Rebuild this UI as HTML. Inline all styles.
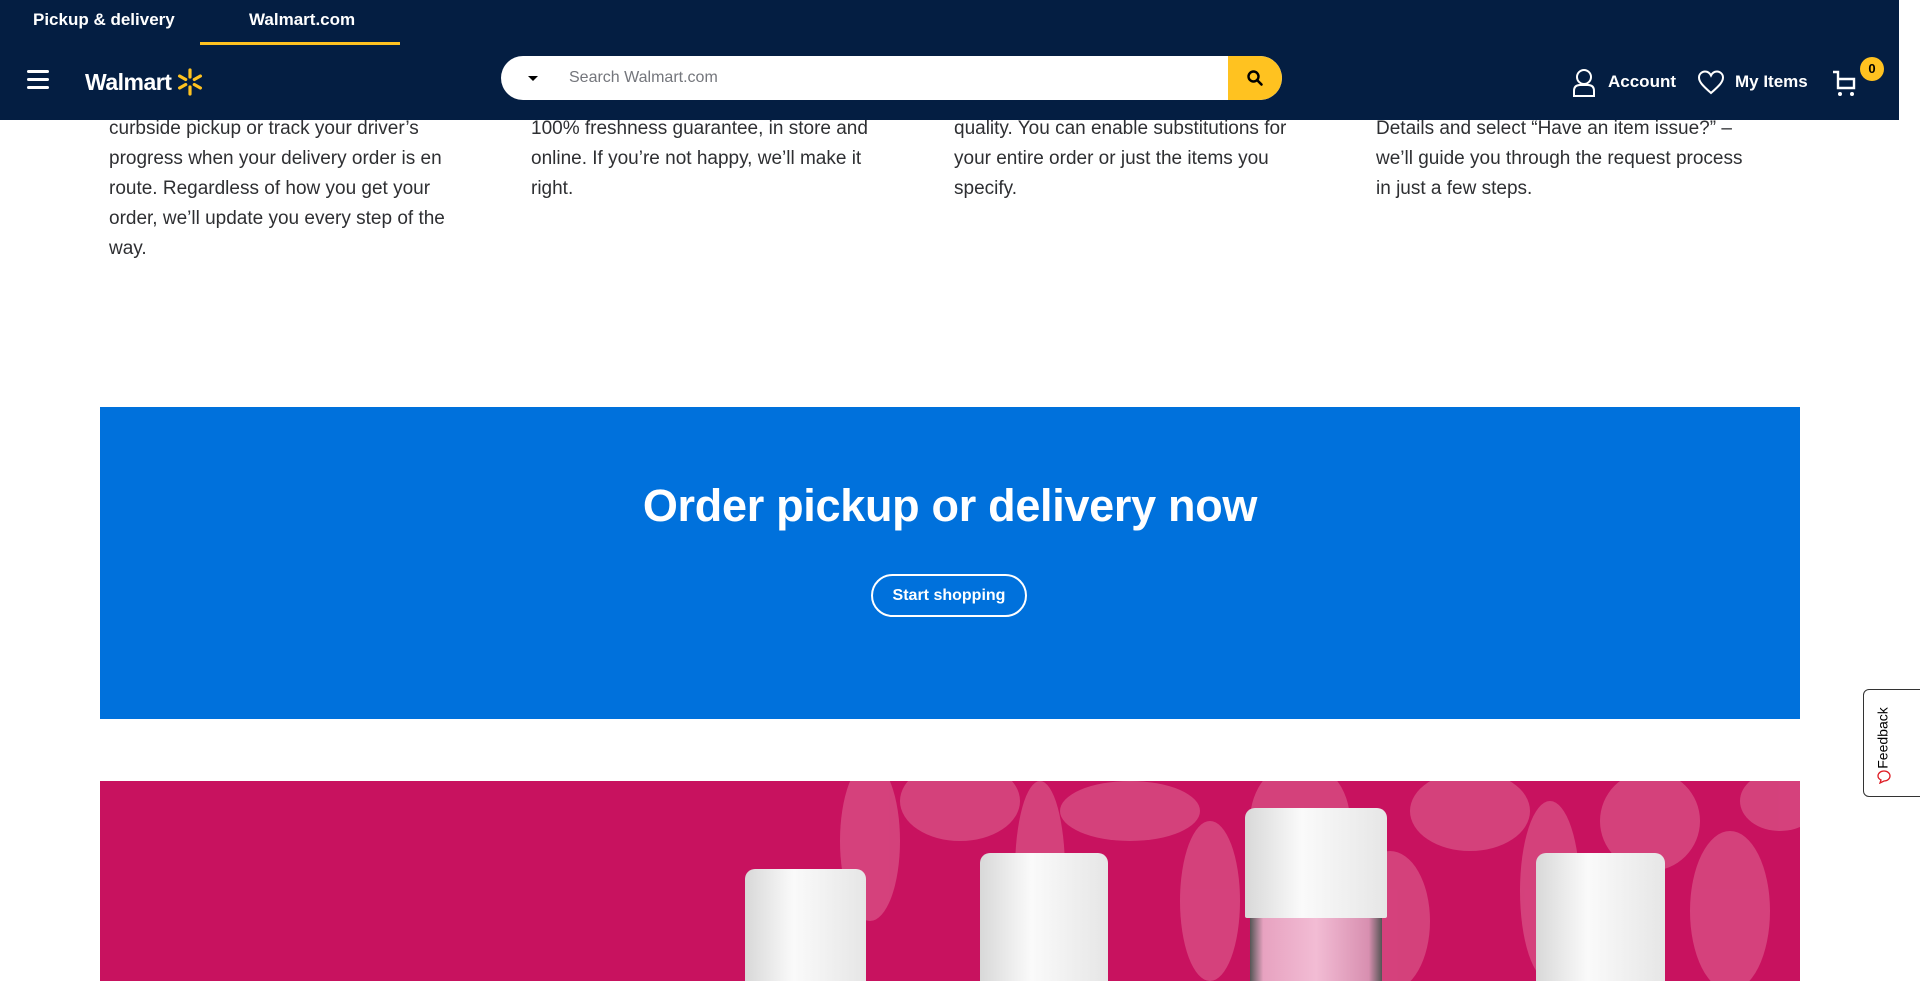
<!DOCTYPE html>
<html><head><meta charset="utf-8"><style>
*{margin:0;padding:0;box-sizing:border-box}
body{width:1920px;height:937px;overflow:hidden;background:#fff;font-family:"Liberation Sans",sans-serif;position:relative}
.hdr{position:absolute;left:0;top:0;width:1899px;height:120px;background:#041e42;z-index:5}
.tab{position:absolute;top:10px;color:#fff;font-weight:bold;font-size:17px}
.ul{position:absolute;left:200px;top:42px;width:200px;height:3px;background:#ffc220}
.ham{position:absolute;left:27px;top:70px;width:22px}
.ham i{display:block;height:3px;background:#fff;border-radius:2px;margin-bottom:5px}
.logo{position:absolute;left:85px;top:69px;color:#fff;font-weight:bold;font-size:23px;letter-spacing:-0.5px}
.search{position:absolute;left:501px;top:56px;width:781px;height:44px;background:#fff;border-radius:22px;overflow:hidden}
.search .ph{position:absolute;left:68px;top:13px;color:#74767c;font-size:16px}
.search .car{position:absolute;left:27px;top:20px;width:0;height:0;border-left:5px solid transparent;border-right:5px solid transparent;border-top:5px solid #000}
.search .btn{position:absolute;right:0;top:0;width:54px;height:44px;background:#ffc220;border-radius:0 22px 22px 0}
.nav{position:absolute;top:72px;color:#fff;font-weight:bold;font-size:17px}
.badge{position:absolute;left:1860px;top:57px;width:24px;height:24px;border-radius:50%;background:#ffc220;color:#000;font-size:13px;font-weight:bold;text-align:center;line-height:24px}
.col{position:absolute;top:114px;width:370px;font-size:19px;line-height:30px;color:#2e2f32}
.blue{position:absolute;left:100px;top:407px;width:1700px;height:312px;background:#0071dc}
.sbtn{position:absolute;left:871px;top:574px;width:156px;height:43px;border:2px solid #fff;border-radius:22px;color:#fff;font-weight:bold;font-size:16px;line-height:39px;text-align:center}
.pink{position:absolute;left:100px;top:781px;width:1700px;height:200px;background:#c8125f;overflow:hidden}
.cap{position:absolute;background:linear-gradient(90deg,#d8d8d8,#fafafa 40%,#e6e6e6);border-radius:10px 10px 2px 2px}
.fb{position:absolute;left:1863px;top:689px;width:70px;height:108px;border:1px solid #333;border-radius:6px;background:#fff}
.fb span{position:absolute;left:-12px;top:40px;transform:rotate(-90deg);font-size:14px;color:#000}
</style></head><body>
<div class="col" style="left:109px">curbside pickup or track your driver’s progress when your delivery order is en route. Regardless of how you get your order, we’ll update you every step of the way.</div>
<div class="col" style="left:531px">100% freshness guarantee, in store and online. If you’re not happy, we’ll make it right.</div>
<div class="col" style="left:954px">quality. You can enable substitutions for your entire order or just the items you specify.</div>
<div class="col" style="left:1376px">Details and select “Have an item issue?” – we’ll guide you through the request process in just a few steps.</div>

<div class="hdr">
<div class="tab" style="left:33px">Pickup &amp; delivery</div>
<div class="tab" style="left:249px">Walmart.com</div>
<div class="ul"></div>
<div class="ham"><i></i><i></i><i></i></div>
<div class="logo">Walmart</div>
<svg style="position:absolute;left:176px;top:68px" width="28" height="28" viewBox="0 0 28 28"><g stroke="#ffc220" stroke-width="3.2" stroke-linecap="round"><line x1="14" y1="2" x2="14" y2="9"/><line x1="14" y1="19" x2="14" y2="26"/><line x1="3.6" y1="8" x2="9.7" y2="11.5"/><line x1="18.3" y1="16.5" x2="24.4" y2="20"/><line x1="3.6" y1="20" x2="9.7" y2="16.5"/><line x1="18.3" y1="11.5" x2="24.4" y2="8"/></g></svg>
<div class="search"><div class="car"></div><div class="ph">Search Walmart.com</div><div class="btn"><svg style="position:absolute;left:18px;top:13px" width="18" height="18" viewBox="0 0 18 18"><circle cx="7.5" cy="7.5" r="5" fill="none" stroke="#000" stroke-width="2.4"/><line x1="11" y1="11" x2="15.5" y2="15.5" stroke="#000" stroke-width="2.6" stroke-linecap="round"/></svg></div></div>
<svg style="position:absolute;left:1572px;top:68px" width="24" height="30" viewBox="0 0 24 30"><circle cx="12" cy="9" r="7" fill="none" stroke="#fff" stroke-width="2"/><path d="M2 28 V23 Q2 17 8 17 H16 Q22 17 22 23 V28 Z" fill="none" stroke="#fff" stroke-width="2"/></svg>
<div class="nav" style="left:1608px">Account</div>
<svg style="position:absolute;left:1697px;top:70px" width="28" height="25" viewBox="0 0 28 25"><path d="M14 23 C6 16 2 12 2 7.5 C2 4 5 1.5 8 1.5 C11 1.5 13 3.5 14 5.5 C15 3.5 17 1.5 20 1.5 C23 1.5 26 4 26 7.5 C26 12 22 16 14 23Z" fill="none" stroke="#fff" stroke-width="2"/></svg>
<div class="nav" style="left:1735px">My Items</div>
<svg style="position:absolute;left:1832px;top:70px" width="28" height="28" viewBox="0 0 28 28"><path d="M1 2 H6 V18 H22 V9 H6" fill="none" stroke="#fff" stroke-width="2.4"/><circle cx="8" cy="24" r="2" fill="#fff"/><circle cx="20" cy="24" r="2" fill="#fff"/></svg>
<div class="badge">0</div>
</div>

<div class="blue"></div>
<div style="position:absolute;left:100px;width:1700px;top:480px;text-align:center;color:#fff;font-size:45px;font-weight:bold;letter-spacing:-0.3px">Order pickup or delivery now</div>
<div class="sbtn">Start shopping</div>

<div class="pink">
<svg style="position:absolute;left:730px;top:0" width="970" height="200" viewBox="0 0 970 200"><g fill="#d6477f" opacity="0.9">
<ellipse cx="40" cy="60" rx="30" ry="80"/><ellipse cx="130" cy="20" rx="60" ry="40"/><ellipse cx="210" cy="90" rx="25" ry="90"/><ellipse cx="300" cy="30" rx="70" ry="30"/><ellipse cx="380" cy="120" rx="30" ry="80"/><ellipse cx="470" cy="40" rx="50" ry="60"/><ellipse cx="560" cy="140" rx="40" ry="70"/><ellipse cx="640" cy="30" rx="60" ry="40"/><ellipse cx="720" cy="110" rx="30" ry="90"/><ellipse cx="820" cy="40" rx="50" ry="50"/><ellipse cx="900" cy="130" rx="40" ry="80"/><ellipse cx="950" cy="20" rx="40" ry="30"/></g></svg>
<div class="cap" style="left:645px;top:88px;width:121px;height:130px"></div>
<div class="cap" style="left:880px;top:72px;width:128px;height:140px"></div>
<div class="cap" style="left:1145px;top:27px;width:142px;height:110px"></div>
<div style="position:absolute;left:1150px;top:137px;width:132px;height:80px;background:linear-gradient(90deg,#555,#e7a2c0 10%,#f2bcd4 50%,#d88fb0 90%,#555)"></div>
<div class="cap" style="left:1436px;top:72px;width:129px;height:140px"></div>
</div>

<div class="fb"><span>Feedback</span>
<svg style="position:absolute;left:13px;top:80px" width="14" height="14" viewBox="0 0 14 14"><path d="M7 1 C10.5 1 13 3.3 13 6 C13 8.7 10.5 11 7 11 L3 13 L4 10 C2 9 1 7.5 1 6 C1 3.3 3.5 1 7 1Z" fill="none" stroke="#de1c24" stroke-width="1.3"/></svg></div>
</body></html>
